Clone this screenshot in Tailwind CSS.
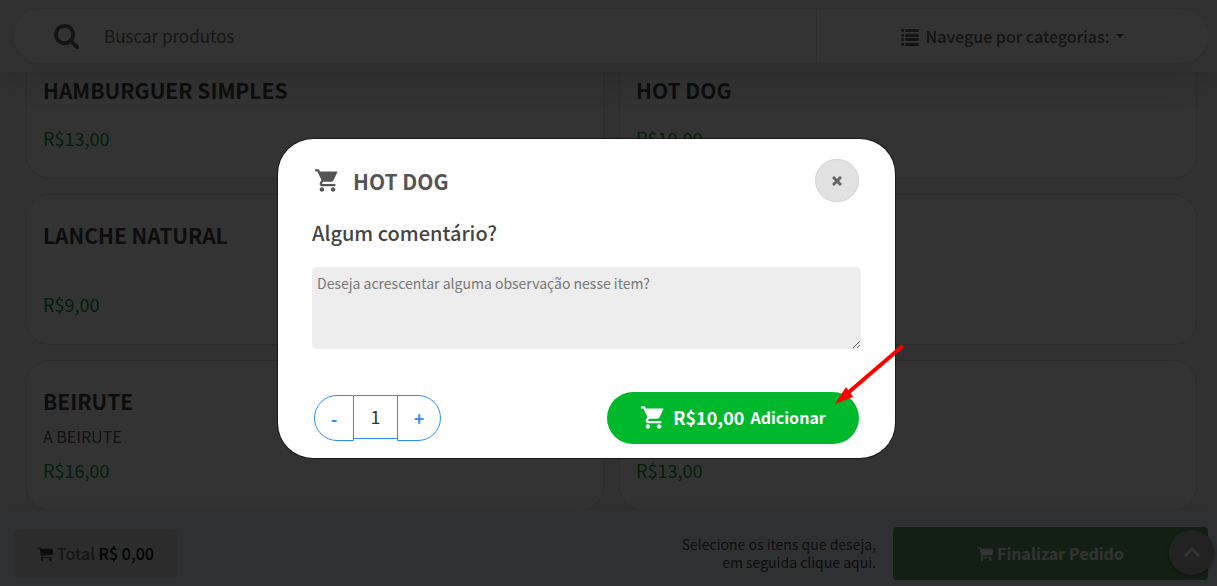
<!DOCTYPE html>
<html lang="pt-BR">
<head>
<meta charset="utf-8">
<meta name="viewport" content="width=device-width, initial-scale=1">
<title>Cardápio</title>
<script src="https://cdn.jsdelivr.net/npm/@tailwindcss/browser@4"></script>
</head>
<body class="relative flex h-screen flex-col overflow-hidden bg-[#f5f5f5] font-['Noto_Sans_CJK_SC','Noto_Sans',sans-serif] text-[#444]">
  <svg class="hidden" aria-hidden="true">
    <symbol id="cart-solid" viewBox="0 0 24 24"><path d="M7 18c-1.100 0-1.990.9-1.990 2S5.900 22 7 22s2-.9 2-2-.9-2-2-2zM1 2v2h2l3.600 7.590-1.350 2.450C4.520 15.370 5.480 17 7 17h12v-2H7.420c-.14 0-.25-.11-.25-.25l.93-1.750h7.450c.75 0 1.410-.41 1.750-1.030l3.700-7.970H5.210L4.270 2H1zm16 16c-1.100 0-1.990.9-1.990 2s.89 2 1.990 2 2-.9 2-2-.9-2-2-2z"/></symbol>
    <symbol id="cart-fa" viewBox="0 0 1664 1792"><path d="M640 1536q0 52-38 90t-90 38-90-38-38-90 38-90 90-38 90 38 38 90zm896 0q0 52-38 90t-90 38-90-38-38-90 38-90 90-38 90 38 38 90zm128-1088v512q0 24-16.500 42.500t-40.500 21.500l-1044 122q13 60 13 70 0 16-24 64h920q26 0 45 19t19 45-19 45-45 19h-1024q-26 0-45-19t-19-45q0-11 8-31.500t16-36 21.500-40 15.500-29.500l-177-823h-204q-26 0-45-19t-19-45 19-45 45-19h256q16 0 28.500 6.500t19.500 15.500 13 24.500 8 26 5.500 29.500 4.500 26h1201q26 0 45 19t19 45z"/></symbol>
  </svg>

  <header class="relative z-10 shrink-0 bg-[#f3f3f3] px-[9px] pt-[9px] pb-[9px] pl-[14px] shadow-[0_10px_40px_rgba(0,0,0,0.16)]">
    <div class="flex h-[54px] items-stretch rounded-full bg-white shadow-[0_2px_16px_rgba(0,0,0,0.08)]">
      <label class="flex flex-1 items-center pl-10">
        <svg class="size-[25px] shrink-0 fill-[#666]" viewBox="0 0 1664 1664" aria-label="Buscar"><path d="M1152 704q0-185-131.500-316.500t-316.500-131.500-316.500 131.500-131.500 316.500 131.500 316.500 316.500 131.500 316.500-131.500 131.500-316.500zm512 832q0 52-38 90t-90 38q-54 0-90-38l-343-342q-179 124-399 124-143 0-273.500-55.500t-225-150-150-225-55.500-273.500 55.500-273.500 150-225 225-150 273.500-55.500 273.500 55.500 225 150 150 225 55.500 273.500q0 220-124 399l343 343q37 37 37 90z"/></svg>
        <input type="search" placeholder="Buscar produtos" class="ml-[25px] min-w-0 flex-1 bg-transparent text-[17px] outline-none placeholder:text-[#6c6c6c]">
      </label>
      <button type="button" class="flex w-[392px] items-center justify-center border-l border-[#dcdcdc] pb-px text-base font-medium text-[#666]">
        <svg class="mt-[3px] mr-[7px] h-[17px] w-[18px] fill-[#666]" viewBox="0 0 18 17"><path d="M1 0h2v3H1L0 2V1zM5 0h12l1 1v1l-1 1H5L4 2V1zM1 5h2v3H1L0 7V6zM5 5h12l1 1v1l-1 1H5L4 7V6zM1 9h2v3H1l-1-1v-1zM5 9h12l1 1v1l-1 1H5l-1-1v-1zM1 14h2v3H1l-1-1v-1zM5 14h12l1 1v1l-1 1H5l-1-1v-1z"/></svg>
        Navegue por categorias:
        <svg class="ml-[7px] h-1 w-2 fill-[#666]" viewBox="0 0 8 4"><path d="M0 0h8L4 4z"/></svg>
      </button>
    </div>
  </header>

  <main class="-mt-[23px] min-h-0 flex-1 overflow-hidden pr-5 pl-[26px]">
    <div class="grid grid-cols-2 gap-[15px]">
      <article class="flex h-[130px] flex-col justify-between rounded-3xl border border-[#dcdcdc] bg-white px-4 pt-[25px] pb-[26px]">
        <h2 class="text-[21px] leading-[30px] font-bold">HAMBURGUER SIMPLES</h2>
        <p class="text-lg leading-7 text-[#009a2b]">R$13,00</p>
      </article>
      <article class="flex h-[130px] flex-col justify-between rounded-3xl border border-[#dcdcdc] bg-white px-4 pt-[25px] pb-[26px]">
        <h2 class="text-[21px] leading-[30px] font-bold">HOT DOG</h2>
        <p class="text-lg leading-7 text-[#009a2b]">R$10,00</p>
      </article>
      <article class="flex h-[151px] flex-col justify-between rounded-3xl border border-[#dcdcdc] bg-white px-4 pt-[25px] pb-[26px]">
        <h2 class="text-[21px] leading-[30px] font-bold">LANCHE NATURAL</h2>
        <p class="text-lg leading-7 text-[#009a2b]">R$9,00</p>
      </article>
      <article class="h-[151px] rounded-3xl border border-[#dcdcdc] bg-white"></article>
      <article class="flex h-[151px] flex-col justify-between rounded-3xl border border-[#dcdcdc] bg-white px-4 pt-[25px] pb-[26px]">
        <h2 class="text-[21px] leading-[30px] font-bold">BEIRUTE</h2>
        <p class="text-base leading-6 text-[#555]">A BEIRUTE</p>
        <p class="text-lg leading-7 text-[#009a2b]">R$16,00</p>
      </article>
      <article class="flex h-[151px] flex-col justify-end rounded-3xl border border-[#dcdcdc] bg-white px-4 pb-[26px]">
        <p class="text-lg leading-7 text-[#009a2b]">R$13,00</p>
      </article>
    </div>
  </main>

  <footer class="relative flex h-[76px] shrink-0 items-center bg-[#ebeff5] pt-[11px] pr-[9px] pl-[14px] shadow-[0_-4px_20px_rgba(0,0,0,0.08)]">
    <button type="button" class="flex h-[49px] w-[163px] items-center justify-center rounded bg-[#dadada] pb-px text-base font-medium">
      <svg class="mr-1 h-[17px] w-4 fill-[#444]"><use href="#cart-fa"/></svg>
      <span class="text-[#666]">Total <span class="text-black">R$ 0,00</span></span>
    </button>
    <p class="mr-[17px] mb-0.5 ml-auto text-right text-sm leading-[18px]">Selecione os itens que deseja,<br>em seguida clique aqui.</p>
    <button type="button" class="flex h-[53px] w-[315px] items-center justify-center rounded bg-[#5f9b66] pb-px text-base font-bold text-white">
      <svg class="mr-1 h-[17px] w-4 fill-white"><use href="#cart-fa"/></svg>
      Finalizar Pedido
    </button>
    <button type="button" aria-label="Voltar ao topo" class="absolute right-[3px] bottom-[11px] flex size-[45px] items-center justify-center rounded-full bg-[#aaa] shadow-[0_1px_5px_rgba(0,0,0,0.4)]">
      <svg class="mb-0.5 h-[10px] w-4 fill-none stroke-white stroke-3" viewBox="0 0 16 10"><path d="M1 9l7-7 7 7"/></svg>
    </button>
  </footer>

  <div class="absolute inset-0 z-20 flex items-start justify-center bg-black/80 pt-[139px] pr-11">
    <section role="dialog" aria-labelledby="item-title" class="relative w-[617px] rounded-[35px] bg-white px-[34px] pt-5 pb-[14px] shadow-[0_0_0_1px_rgba(0,0,0,0.5)]">
      <div class="flex items-center pr-0.5">
        <svg class="ml-0.5 size-[27px] fill-[#555]"><use href="#cart-solid"/></svg>
        <h1 id="item-title" class="ml-3 text-[21px] leading-[30px] font-bold text-[#555]">HOT DOG</h1>
        <button type="button" aria-label="Fechar" class="ml-auto flex h-[43px] w-11 items-center justify-center rounded-full border border-[#d3d3d3] bg-[#e1e1e1]">
          <svg class="size-[10px] stroke-[#666] stroke-3" viewBox="0 0 10 10"><path d="M1 1l8 8M9 1l-8 8"/></svg>
        </button>
      </div>
      <label for="obs" class="mt-4 block text-xl leading-[30px] font-medium text-[#444]">Algum comentário?</label>
      <textarea id="obs" placeholder="Deseja acrescentar alguma observação nesse item?" class="mt-[19px] block h-[82px] w-full resize rounded-[5px] bg-[#ededed] px-[5px] py-1.5 text-sm leading-5 outline-none placeholder:text-[#777]"></textarea>
      <div class="mt-[43px] flex items-center justify-between px-0.5">
        <div class="flex items-start text-[#2e8ded]">
          <button type="button" aria-label="Diminuir" class="h-[46px] w-10 rounded-l-full border border-[#2e8ded] text-lg font-bold">-</button>
          <input type="text" value="1" aria-label="Quantidade" class="h-11 w-[43px] border-y border-[#2e8ded] pb-0.5 text-center text-lg text-[#333] outline-none">
          <button type="button" aria-label="Aumentar" class="h-[46px] w-11 rounded-r-full border border-[#2e8ded] text-lg font-bold">+</button>
        </div>
        <button type="button" class="flex h-[52px] w-[252px] items-center justify-center rounded-full bg-[#00b82b] pb-0.5 text-base font-bold text-white">
          <svg class="mr-1.5 size-[27px] fill-white"><use href="#cart-solid"/></svg>
          <span class="mr-1.5 text-lg">R$10,00</span>Adicionar
        </button>
      </div>
      <svg class="pointer-events-none absolute top-[205px] left-[557px] h-[61px] w-[70px]" viewBox="0 0 70 61" aria-hidden="true">
        <path d="M66.500 3L14 48" fill="none" stroke="#f00" stroke-width="4" stroke-linecap="round"/>
        <path d="M0 60l11-17 3 4 3 4 1 2z" fill="#f00"/>
      </svg>
    </section>
  </div>
</body>
</html>
